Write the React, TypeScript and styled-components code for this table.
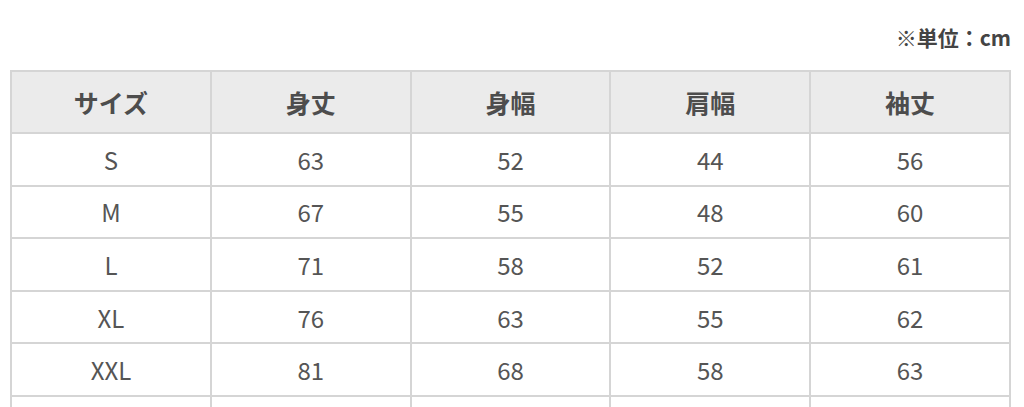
import React from "react";
import styled, { createGlobalStyle } from "styled-components";

type SizeRow = {
  size: string;
  length: number;
  width: number;
  shoulder: number;
  sleeve: number;
};

const GlobalStyle = createGlobalStyle`
  body {
    margin: 0;
    background: #ffffff;
    font-family: "Noto Sans CJK JP", "Noto Sans", sans-serif;
  }
`;

const Wrapper = styled.div`
  padding: 22px 13px 0 10px;
`;

const Unit = styled.p`
  margin: 0 0 18px;
  text-align: right;
  font-size: 21px;
  line-height: 30px;
  font-weight: 700;
  color: #444444;
`;

const Table = styled.table`
  width: 1001px;
  border-collapse: collapse;
  table-layout: fixed;
  border: 2px solid #d5d5d5;
`;

const HeadCell = styled.th`
  height: 60px;
  padding: 0;
  border: 2px solid #d5d5d5;
  background: #ebebeb;
  color: #4d4d4d;
  font-size: 25px;
  font-weight: 700;
  text-align: center;
  vertical-align: middle;
`;

const Cell = styled.td`
  height: 50.6px;
  padding: 0;
  border: 2px solid #d5d5d5;
  color: #555555;
  font-size: 24px;
  font-weight: 400;
  text-align: center;
  vertical-align: middle;
`;

const headers = ["サイズ", "身丈", "身幅", "肩幅", "袖丈"];

const rows: SizeRow[] = [
  { size: "S", length: 63, width: 52, shoulder: 44, sleeve: 56 },
  { size: "M", length: 67, width: 55, shoulder: 48, sleeve: 60 },
  { size: "L", length: 71, width: 58, shoulder: 52, sleeve: 61 },
  { size: "XL", length: 76, width: 63, shoulder: 55, sleeve: 62 },
  { size: "XXL", length: 81, width: 68, shoulder: 58, sleeve: 63 },
  { size: "3XL", length: 85, width: 73, shoulder: 61, sleeve: 64 },
];

const App = () => (
  <>
    <GlobalStyle />
    <Wrapper>
      <Unit>※単位：cm</Unit>
      <Table>
        <thead>
          <tr>
            {headers.map((h) => (
              <HeadCell key={h}>{h}</HeadCell>
            ))}
          </tr>
        </thead>
        <tbody>
          {rows.map((row) => (
            <tr key={row.size}>
              <Cell>{row.size}</Cell>
              <Cell>{row.length}</Cell>
              <Cell>{row.width}</Cell>
              <Cell>{row.shoulder}</Cell>
              <Cell>{row.sleeve}</Cell>
            </tr>
          ))}
        </tbody>
      </Table>
    </Wrapper>
  </>
);

export default App;
